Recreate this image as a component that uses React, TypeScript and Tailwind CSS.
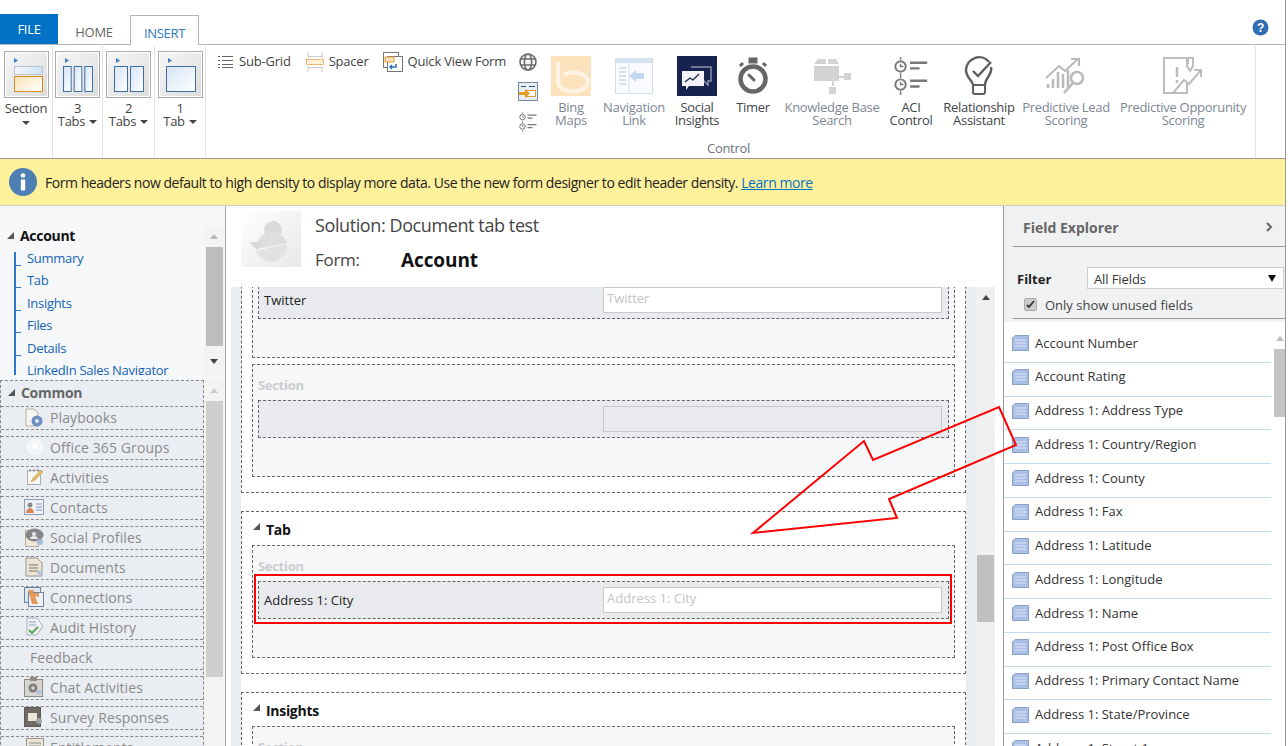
import type { ReactNode } from 'react';

const fieldNames = [
  'Account Number',
  'Account Rating',
  'Address 1: Address Type',
  'Address 1: Country/Region',
  'Address 1: County',
  'Address 1: Fax',
  'Address 1: Latitude',
  'Address 1: Longitude',
  'Address 1: Name',
  'Address 1: Post Office Box',
  'Address 1: Primary Contact Name',
  'Address 1: State/Province',
  'Address 1: Street 1',
];

const accountLinks = ['Summary', 'Tab', 'Insights', 'Files', 'Details', 'LinkedIn Sales Navigator'];

function Caret() {
  return <span className="inline-block w-0 h-0 border-x-[4px] border-x-transparent border-t-[4px] border-t-[#444]" />;
}

function Corner() {
  return (
    <svg width="9" height="9" viewBox="0 0 9 9" className="shrink-0">
      <path d="M8 1v7H1z" fill="#555" />
    </svg>
  );
}

function TabIcon({ cols, id }: { cols: number; id: string }) {
  const gap = 3;
  const total = 29;
  const w = (total - gap * (cols - 1)) / cols;
  return (
    <div className="w-[45px] h-[47px] border border-[#ababab] p-[1px] bg-white">
      <svg width="41" height="43" viewBox="0 0 41 43">
        <defs>
          <linearGradient id={id + 'bg'} x1="0" y1="0" x2="1" y2="1">
            <stop offset="0" stopColor="#f6f6f6" />
            <stop offset="1" stopColor="#dcdcdc" />
          </linearGradient>
          <linearGradient id={id + 'c'} x1="0" y1="0" x2="1" y2="1">
            <stop offset="0" stopColor="#d5e4f6" />
            <stop offset="1" stopColor="#ffffff" />
          </linearGradient>
        </defs>
        <rect width="41" height="43" rx="2" fill={'url(#' + id + 'bg)'} />
        <path d="M8 5l4 2.5L8 10z" fill="#3f7fc4" />
        {Array.from({ length: cols }).map((_, i) => (
          <rect key={i} x={6.5 + i * (w + gap)} y="13.5" width={w} height="25" fill={'url(#' + id + 'c)'} stroke="#3f6ea5" />
        ))}
      </svg>
    </div>
  );
}

function SectionIcon() {
  return (
    <div className="w-[45px] h-[47px] border border-[#ababab] p-[1px] bg-white">
      <svg width="41" height="43" viewBox="0 0 41 43">
        <defs>
          <linearGradient id="secbg" x1="0" y1="0" x2="1" y2="1">
            <stop offset="0" stopColor="#f6f6f6" />
            <stop offset="1" stopColor="#dcdcdc" />
          </linearGradient>
          <linearGradient id="secb" x1="0" y1="0" x2="1" y2="0">
            <stop offset="0" stopColor="#f3f6fa" />
            <stop offset="1" stopColor="#cfe0f5" />
          </linearGradient>
          <linearGradient id="seco" x1="0" y1="0" x2="1" y2="1">
            <stop offset="0" stopColor="#fce3b8" />
            <stop offset="1" stopColor="#ffffff" />
          </linearGradient>
        </defs>
        <rect width="41" height="43" rx="2" fill="url(#secbg)" />
        <path d="M8 5l4 2.5L8 10z" fill="#3f7fc4" />
        <rect x="8.5" y="13.5" width="28" height="8" fill="url(#secb)" stroke="#b8c4d2" />
        <rect x="8.5" y="23.5" width="28" height="15" fill="url(#seco)" stroke="#d98a1f" />
      </svg>
    </div>
  );
}

function BigButton({ width, label, sub, caret }: { width: number; label: string; sub?: string; caret?: boolean }) {
  return (
    <div className="h-full border-r border-[#e3e3e3] flex flex-col items-center text-[13px] leading-[13px] text-[#444] pt-[5px]" style={{ width }}>
      {label === 'Section' ? <SectionIcon /> : <TabIcon cols={Number(label)} id={'t' + label} />}
      <span className="mt-[4px]">{label}</span>
      {sub && (
        <span className="flex items-center gap-[4px]">
          {sub}
          {caret && <Caret />}
        </span>
      )}
      {!sub && (
        <span className="mt-[6px] flex">
          <Caret />
        </span>
      )}
    </div>
  );
}

function SubGridIcon() {
  return (
    <svg width="15" height="14" viewBox="0 0 15 14" stroke="#666" fill="none">
      <path d="M0 1.5h2M4 1.5h11M0 5.5h2M4 5.5h11M0 9.5h2M4 9.5h11M0 12.5h2M4 12.5h11" />
    </svg>
  );
}

function SpacerIcon() {
  return (
    <svg width="18" height="20" viewBox="0 0 18 20" fill="none">
      <path d="M2 0v6M16 0v6M2 14v6M16 14v6" stroke="#ccc" />
      <path d="M2 4.5h14M2 15.5h14" stroke="#ccc" />
      <rect x="0.5" y="7.5" width="17" height="5" fill="#fdf0dc" stroke="#e39a3c" strokeDasharray="2 1" />
    </svg>
  );
}

function QuickViewIcon() {
  return (
    <svg width="20" height="20" viewBox="0 0 20 20" fill="none">
      <rect x="0.5" y="0.5" width="15" height="15" fill="#fff" stroke="#777" />
      <rect x="4.5" y="4.5" width="15" height="15" fill="#fff" stroke="#777" />
      <path d="M2 5h9v5H2z" fill="#fbe3c2" stroke="#e69a3a" />
      <path d="M13 12v3H7m2-2l-2 2 2 2" stroke="#2f6fb5" strokeWidth="1.5" />
    </svg>
  );
}

function GlobeIcon() {
  return (
    <svg width="18" height="18" viewBox="0 0 18 18" fill="none" stroke="#6d6d6d" strokeWidth="1.6">
      <circle cx="9" cy="9" r="8" />
      <ellipse cx="9" cy="9" rx="3.6" ry="8" />
      <path d="M1.5 6h15M1.5 12h15" />
    </svg>
  );
}

function WebResIcon() {
  return (
    <svg width="20" height="19" viewBox="0 0 20 19" fill="none">
      <rect x="0.5" y="0.5" width="19" height="18" fill="#e8eef5" stroke="#7288a3" />
      <path d="M3 4.5h5M11 4.5h6" stroke="#2f4f7a" />
      <rect x="8.5" y="8.5" width="9" height="6" fill="#fff" stroke="#e39a3c" />
      <path d="M1 10h6V7l5 4.5L7 16v-3H1z" fill="#e69a1e" />
    </svg>
  );
}

function AciIcon({ size, color }: { size: number; color: string }) {
  return (
    <svg width={size} height={size} viewBox="0 0 36 40" fill="none" stroke={color}>
      <circle cx="7" cy="10" r="5.5" strokeWidth="2" />
      <circle cx="7" cy="29" r="5.5" strokeWidth="2" />
      <path d="M7 0v3M7 17v5M7 36v4M7 7v3h3M7 26v3h3" strokeWidth="1.5" />
      <path d="M17 6h18M17 12h10M17 25h18M17 31h10" strokeWidth="2.5" />
    </svg>
  );
}

function BingIcon() {
  return (
    <svg width="40" height="40" viewBox="0 0 40 40">
      <rect width="40" height="40" fill="#fde3bd" />
      <path d="M7 6v20a15 9.5 0 1 0 15-9.5c-4 0-7 1-9 2" fill="none" stroke="#fff4e4" strokeWidth="4" />
    </svg>
  );
}

function NavLinkIcon() {
  return (
    <svg width="38" height="36" viewBox="0 0 38 36" fill="none">
      <rect x="0.5" y="0.5" width="37" height="35" fill="#f9fbfe" stroke="#d5deec" />
      <rect x="1" y="1" width="36" height="4" fill="#d6e3f5" />
      <path d="M14 5v30" stroke="#d5deec" />
      <path d="M4 10h7M4 14h7M4 18h7M4 22h7M4 26h7" stroke="#c6d3e6" strokeWidth="1.5" />
      <path d="M14 18l7-6v3h8v6h-8v3z" fill="#c4d7f2" />
    </svg>
  );
}

function SocialIcon() {
  return (
    <svg width="40" height="40" viewBox="0 0 40 40" fill="none">
      <rect width="40" height="40" fill="#17234f" />
      <path d="M14 11h20v14h-3v4l-4-4H22" stroke="#8a93ad" strokeWidth="1.5" />
      <path d="M5 15h22v15H12l-3 4v-4H5z" fill="#f2f3f7" />
      <path d="M8 26l5-4 3 2 6-6" stroke="#17234f" strokeWidth="1.2" />
    </svg>
  );
}

function TimerIcon() {
  return (
    <svg width="32" height="38" viewBox="0 0 32 38" fill="none" stroke="#666">
      <circle cx="16" cy="22" r="12.5" strokeWidth="4.5" />
      <rect x="12" y="1" width="8" height="5" fill="#666" />
      <path d="M3 9l3-3M29 9l-3-3" strokeWidth="3" />
      <path d="M12 18l5 5" strokeWidth="3" strokeLinecap="round" />
    </svg>
  );
}

function KbIcon() {
  return (
    <svg width="38" height="38" viewBox="0 0 38 38" fill="#d3d3d3">
      <path d="M1 7l4-5h8v5zM15 2h8l3 5H15zM1 9h25v15H1z" />
      <path d="M20 24v5" stroke="#d3d3d3" strokeWidth="2" />
      <path d="M20 20h12" stroke="#d3d3d3" strokeWidth="2" />
      <rect x="31" y="16" width="7" height="7" />
      <rect x="16" y="30" width="7" height="7" />
    </svg>
  );
}

function BulbIcon() {
  return (
    <svg width="30" height="40" viewBox="0 0 30 40" fill="none" stroke="#5f5f5f" strokeWidth="2.4">
      <path d="M9 29c0-4-7-7-7-15a13 13 0 0 1 23-8" />
      <path d="M27 11c2 7-6 11-6 18" />
      <path d="M9 29h12v7a2 2 0 0 1-2 2h-8a2 2 0 0 1-2-2z" strokeWidth="2" />
      <path d="M9 15l5 5 13-14" />
    </svg>
  );
}

function LeadIcon() {
  return (
    <svg width="40" height="36" viewBox="0 0 40 36" fill="none" stroke="#b9b9b9">
      <path d="M0 20L13 8l6 5L32 1m-7 0h8v7" strokeWidth="2" />
      <path d="M2 30v-4M7 30v-9M12 30V14M17 30V16M22 30V12" strokeWidth="2.5" />
      <circle cx="31" cy="20" r="6" strokeWidth="2.5" />
      <path d="M27 25l-9 10" strokeWidth="2.5" />
    </svg>
  );
}

function OppIcon() {
  return (
    <svg width="40" height="38" viewBox="0 0 40 38" fill="none" stroke="#bdbdbd" strokeWidth="2">
      <path d="M24 26v10H1V1h24v6" />
      <path d="M24 1v8l3 5 3-5V1z" />
      <path d="M14 10v10M14 23v3" strokeWidth="2.5" />
      <path d="M10 36l11-13 5 4 12-14m-7 0h7v7" />
    </svg>
  );
}

function ControlButton({ width, label, sub, icon, off }: { width: number; label: string; sub?: string; icon: ReactNode; off?: boolean }) {
  return (
    <div className="flex flex-col items-center shrink-0" style={{ width }}>
      <div className="h-[41px] flex items-center justify-center">{icon}</div>
      <span className={'mt-[5px] text-center text-[13px] leading-[13px] whitespace-nowrap ' + (off ? 'text-[#7e8794]' : 'text-[#3f4348]')}>
        {label}
        {sub && <br />}
        {sub}
      </span>
    </div>
  );
}

function NavIcon({ kind }: { kind: string }) {
  if (kind === 'groups') {
    return (
      <svg width="18" height="18" viewBox="0 0 18 18">
        <circle cx="9" cy="9" r="8" fill="#f4f6f9" stroke="#f8f9fb" />
        <circle cx="9" cy="8" r="2.5" fill="#fff" />
      </svg>
    );
  }
  if (kind === 'playbooks') {
    return (
      <svg width="19" height="19" viewBox="0 0 19 19">
        <path d="M1 1h8l4 4v13H1z" fill="#f7f5f1" stroke="#b9b1a5" />
        <circle cx="12" cy="13" r="5.5" fill="#6e8cc0" />
        <circle cx="12" cy="13" r="2" fill="#dfe7f4" />
      </svg>
    );
  }
  if (kind === 'activities') {
    return (
      <svg width="18" height="18" viewBox="0 0 18 18">
        <rect x="1.5" y="2.5" width="13" height="14" fill="#f7f7f5" stroke="#a9adb3" />
        <path d="M4 1v3M8 1v3M12 1v3" stroke="#8a8f96" />
        <path d="M5 14l2-4 8-8 2 2-8 8z" fill="#e6bd6a" stroke="#b78e44" strokeWidth="0.5" />
      </svg>
    );
  }
  if (kind === 'contacts') {
    return (
      <svg width="20" height="20" viewBox="0 0 20 20">
        <rect x="0.5" y="2.5" width="19" height="15" fill="#eef2f8" stroke="#8b9db8" />
        <circle cx="6" cy="8" r="2.5" fill="#8a8a8a" />
        <path d="M2 16c0-3 2-5 4-5s4 2 4 5z" fill="#d98555" />
        <path d="M12 7h6M12 10h6M12 13h6" stroke="#7d98bd" />
      </svg>
    );
  }
  if (kind === 'social') {
    return (
      <svg width="19" height="20" viewBox="0 0 19 20">
        <rect x="0.5" y="3.5" width="13" height="16" fill="#efe6d6" stroke="#b5ad9f" />
        <ellipse cx="9.5" cy="8" rx="9" ry="6.5" fill="#85868a" />
        <circle cx="9" cy="7" r="2" fill="#e9e9e9" />
        <path d="M5 12c0-2 2-3 4-3s4 1 4 3z" fill="#e9e9e9" />
        <circle cx="15" cy="15" r="3" fill="#a7bad6" />
      </svg>
    );
  }
  if (kind === 'documents') {
    return (
      <svg width="19" height="20" viewBox="0 0 19 20">
        <path d="M1 1h11l5 5v13H1z" fill="#ece4d4" stroke="#9c9488" />
        <path d="M4 8h9M4 11h9M4 14h9" stroke="#77736c" />
        <circle cx="15" cy="16" r="2.5" fill="#b5c4da" />
      </svg>
    );
  }
  if (kind === 'connections') {
    return (
      <svg width="20" height="20" viewBox="0 0 20 20">
        <rect x="0.5" y="0.5" width="16" height="15" fill="#dee6f0" stroke="#6c83a6" />
        <rect x="4.5" y="5.5" width="15" height="14" fill="#eef2f7" stroke="#6c83a6" />
        <path d="M4 3h6l-1 3h6v4l-4-1 3 8H8z" fill="#e29a58" />
      </svg>
    );
  }
  if (kind === 'audit') {
    return (
      <svg width="18" height="20" viewBox="0 0 18 20">
        <path d="M1 1h10l6 8-6 9H1z" fill="#eef0f4" stroke="#a8b0bd" />
        <path d="M3 5h7M3 8h7" stroke="#8aa3c6" />
        <path d="M3 13l3 3 6-6" fill="none" stroke="#55a54a" strokeWidth="1.8" />
      </svg>
    );
  }
  if (kind === 'chat') {
    return (
      <svg width="20" height="20" viewBox="0 0 20 20">
        <rect x="0.5" y="2.5" width="18" height="17" fill="#d9d6cf" stroke="#8f8b84" />
        <rect x="6" y="0" width="7" height="4" fill="#8f8b84" />
        <circle cx="9" cy="11" r="4.5" fill="#7f7f7f" />
        <circle cx="9" cy="11" r="1.8" fill="#dad8d2" />
        <circle cx="15" cy="15" r="2.5" fill="#b5c4da" />
      </svg>
    );
  }
  if (kind === 'survey') {
    return (
      <svg width="20" height="20" viewBox="0 0 20 20">
        <rect x="0.5" y="0.5" width="16" height="19" fill="#6e6a63" stroke="#5e5a54" />
        <rect x="4" y="6" width="9" height="8" fill="#ece7dc" />
        <circle cx="15" cy="14" r="3" fill="#9aa3b0" />
      </svg>
    );
  }
  return (
    <svg width="18" height="18" viewBox="0 0 18 18">
      <rect x="0.5" y="0.5" width="17" height="17" fill="#ece4d4" stroke="#9c9488" />
      <path d="M3 5h12M3 8h12" stroke="#8a8f96" />
    </svg>
  );
}

const commonItems = [
  { name: 'Playbooks', kind: 'playbooks' },
  { name: 'Office 365 Groups', kind: 'groups' },
  { name: 'Activities', kind: 'activities' },
  { name: 'Contacts', kind: 'contacts' },
  { name: 'Social Profiles', kind: 'social' },
  { name: 'Documents', kind: 'documents' },
  { name: 'Connections', kind: 'connections' },
  { name: 'Audit History', kind: 'audit' },
  { name: 'Feedback', kind: '' },
  { name: 'Chat Activities', kind: 'chat' },
  { name: 'Survey Responses', kind: 'survey' },
  { name: 'Entitlements', kind: 'entitlements' },
];

function FieldRow({ label, placeholder, highlight }: { label?: string; placeholder?: string; highlight?: boolean }) {
  return (
    <div className="relative h-[38px] ml-[5px] mr-[5px] border border-dashed border-[#666] bg-[#e8eaee] flex justify-between pr-[6px] tracking-normal">
      <span className="pl-[5px] pt-[9px] text-[13px] leading-[18px] text-[#222]">{label}</span>
      <div
        className={
          'mt-[5px] w-[339px] h-[26px] border border-[#c8c8c8] px-[3px] text-[13px] leading-[21px] text-[#c4c4c4] ' +
          (placeholder ? 'bg-white' : 'bg-[#e8eaee]')
        }
      >
        {placeholder}
      </div>
      {highlight && <div className="absolute -left-[5px] -right-[4px] -top-[8px] -bottom-[6px] border-2 border-[#f00]" />}
    </div>
  );
}

function FormSection({ children }: { children: ReactNode }) {
  return (
    <div className="mx-[10px] h-[113px] border border-dashed border-[#666] bg-[#f6f7f9]">
      <div className="h-[35px] pl-[5px] pt-[11px] text-[13px] leading-[18px] font-bold text-[#ccc]">Section</div>
      {children}
    </div>
  );
}

function TabHeading({ title }: { title: string }) {
  return (
    <div className="h-[33px] flex items-center gap-[5px] pl-[10px] pt-[2px] text-[14px] font-bold text-[#111]">
      <span className="-mt-[6px] flex">
        <Corner />
      </span>
      {title}
    </div>
  );
}

function FieldIcon() {
  return (
    <svg width="17" height="16" viewBox="0 0 17 16" className="shrink-0">
      <path d="M3 0.5h13.5v15H0.5V3z" fill="#a9bfe6" stroke="#8a9fc8" />
      <path d="M3 5h11M3 8h11M3 11h11" stroke="#dfe8f7" />
    </svg>
  );
}

export default function App() {
  return (
    <div className="relative w-[1288px] h-[746px] overflow-hidden bg-white flex font-['Open_Sans','Noto_Sans',sans-serif] text-[13px] tracking-[-0.3px]">
      <div className="w-[1286px] border-r border-[#999] flex flex-col shrink-0">
        {/* tab strip */}
        <div className="h-[45px] border-b border-[#b5b5b5] flex items-end shrink-0 relative pr-[16px]">
          <div className="w-[58px] h-[30px] bg-[#0072c6] text-white text-center leading-[30px] text-[13px]">FILE</div>
          <div className="w-[72px] h-[29px] text-center leading-[34px] text-[#666]">HOME</div>
          <div className="w-[69px] h-[30px] -mb-px border border-b-0 border-[#b5b5b5] bg-white text-center leading-[34px] text-[#2a78b8]">INSERT</div>
          <svg width="17" height="17" viewBox="0 0 17 17" className="ml-auto mb-[8px]">
            <circle cx="8.5" cy="8.5" r="8" fill="#2f6db0" />
            <text x="8.5" y="13" textAnchor="middle" fontSize="12" fontWeight="700" fill="#fff" fontFamily="Liberation Sans, sans-serif">?</text>
          </svg>
        </div>

        {/* ribbon */}
        <div className="h-[114px] border-b border-[#999] flex shrink-0 pt-[1px]">
          <BigButton width={53} label="Section" />
          <BigButton width={50} label="3" sub="Tabs" caret />
          <BigButton width={52} label="2" sub="Tabs" caret />
          <BigButton width={51} label="1" sub="Tab" caret />
          <div className="w-[1050px] h-full border-r border-[#e3e3e3] flex flex-col">
            <div className="flex-1 flex">
              <div className="w-[309px] flex items-start pl-[12px] pt-[6px] text-[#444] tracking-[-0.2px] shrink-0">
                <span className="flex items-center gap-[6px] h-[20px]"><SubGridIcon />Sub-Grid</span>
                <span className="flex items-center gap-[5px] h-[20px] ml-[15px]"><SpacerIcon />Spacer</span>
                <span className="flex items-center gap-[5px] h-[20px] ml-[14px]"><QuickViewIcon />Quick View Form</span>
              </div>
              <div className="w-[26px] flex flex-col items-center pt-[7px] gap-[11px] shrink-0">
                <GlobeIcon />
                <WebResIcon />
                <AciIcon size={20} color="#777" />
              </div>
              <div className="flex pt-[9px]">
                <ControlButton width={60} label="Bing" sub="Maps" icon={<BingIcon />} off />
                <ControlButton width={66} label="Navigation" sub="Link" icon={<NavLinkIcon />} off />
                <ControlButton width={60} label="Social" sub="Insights" icon={<SocialIcon />} />
                <ControlButton width={52} label="Timer" icon={<TimerIcon />} />
                <ControlButton width={106} label="Knowledge Base" sub="Search" icon={<KbIcon />} off />
                <ControlButton width={52} label="ACI" sub="Control" icon={<AciIcon size={38} color="#777" />} />
                <ControlButton width={84} label="Relationship" sub="Assistant" icon={<BulbIcon />} />
                <ControlButton width={90} label="Predictive Lead" sub="Scoring" icon={<LeadIcon />} off />
                <ControlButton width={144} label="Predictive Opporunity" sub="Scoring" icon={<OppIcon />} off />
              </div>
            </div>
            <div className="text-center pr-[4px] pb-[2px] text-[13px] leading-[16px] text-[#6d7480]">Control</div>
          </div>
        </div>

        {/* notification */}
        <div className="h-[47px] bg-[#fff09c] border-b border-[#ccc] flex items-center gap-[8px] pl-[9px] shrink-0">
          <svg width="28" height="28" viewBox="0 0 28 28">
            <circle cx="14" cy="14" r="14" fill="#4d7fb5" />
            <circle cx="14" cy="7.5" r="2.3" fill="#fff" />
            <rect x="11.8" y="11.5" width="4.4" height="11" fill="#fff" />
          </svg>
          <span className="text-[14px] text-[#222] tracking-[-0.45px]">
            Form headers now default to high density to display more data. Use the new form designer to edit header density.{' '}
            <span className="text-[#0072c6] underline">Learn more</span>
          </span>
        </div>

        <div className="flex-1 flex min-h-0">
          {/* left nav */}
          <div className="w-[226px] border-r border-[#a6a6a6] bg-[#f6f7f9] flex flex-col shrink-0 overflow-hidden">
            <div className="h-[174px] flex shrink-0">
              <div className="w-[204px] pt-[20px] overflow-hidden">
                <div className="flex items-center gap-[5px] pl-[6px] h-[18px] text-[14px] font-bold text-[#111]">
                  <Corner />
                  Account
                </div>
                <div className="ml-[14px] mt-[8px] h-[123px] overflow-hidden border-l-2 border-[#2a7ccb]">
                  <div className="-mt-[5px]">
                    {accountLinks.map((n) => (
                      <div key={n} className="h-[22.5px] flex items-center">
                        <span className="w-[5px] h-[1px] self-end mb-[4px] bg-[#2a7ccb] mr-[6px] shrink-0" />
                        <span className="text-[13px] text-[#1464b4] whitespace-nowrap">{n}</span>
                      </div>
                    ))}
                  </div>
                </div>
              </div>
              <div className="w-[20px] mt-[20px] h-[150px] bg-[#f3f3f3] flex flex-col items-center">
                <span className="mt-[8px] w-0 h-0 border-x-[4px] border-x-transparent border-b-[5px] border-b-[#bbb]" />
                <div className="mt-[8px] ml-[1px] w-[17px] h-[99px] bg-[#bdbdbd]" />
                <span className="mt-[13px] w-0 h-0 border-x-[4px] border-x-transparent border-t-[5px] border-t-[#444]" />
              </div>
            </div>
            <div className="flex flex-1 min-h-0">
              <div className="w-[204px] h-[400px] border border-dashed border-[#888] border-b-0 bg-[#eaeef3] shrink-0">
                <div className="h-[25px] flex items-center gap-[5px] pl-[6px] pb-[2px] text-[14px] font-bold text-[#666]">
                  <Corner />
                  Common
                </div>
                {commonItems.map((item) => (
                  <div key={item.name} className="h-[24px] mb-[6px] border-y border-dashed border-[#888] flex items-center pb-[2px] text-[14px] tracking-[0.1px] text-[#8a8a8a]">
                    {item.kind ? (
                      <span className="w-[49px] flex justify-end pr-[6px] shrink-0">
                        <NavIcon kind={item.kind} />
                      </span>
                    ) : (
                      <span className="w-[29px] shrink-0" />
                    )}
                    {item.name}
                  </div>
                ))}
              </div>
              <div className="w-[20px] bg-[#f3f3f3] flex flex-col items-center">
                <span className="mt-[8px] w-0 h-0 border-x-[4px] border-x-transparent border-b-[5px] border-b-[#ccc]" />
                <div className="mt-[8px] ml-[1px] w-[17px] h-[276px] bg-[#cdcfcd]" />
              </div>
            </div>
          </div>

          {/* form canvas */}
          <div className="w-[777px] flex flex-col shrink-0">
            <div className="h-[81px] flex shrink-0 pl-[15px] pt-[5px]">
              <svg width="60" height="56" viewBox="0 0 60 56">
                <defs>
                  <linearGradient id="av" x1="0" y1="0" x2="1" y2="1">
                    <stop offset="0" stopColor="#ffffff" />
                    <stop offset="1" stopColor="#e8e8e8" />
                  </linearGradient>
                </defs>
                <rect width="60" height="56" fill="url(#av)" />
                <circle cx="32" cy="19" r="9" fill="#dadada" />
                <path d="M15 38a16 16 0 0 1 31-6z" fill="#dedede" />
                <path d="M15 40l31-7a16 16 0 0 1-31 7z" fill="#e2e2e2" />
                <path d="M8 31h14l-6 8z" fill="#d8d8d8" />
              </svg>
              <div className="ml-[14px] text-[#444]">
                <div className="text-[18px] leading-[28px] tracking-[-0.4px]">Solution: Document tab test</div>
                <div className="flex items-center mt-[8px]">
                  <span className="w-[86px] text-[17px] leading-[26px]">Form:</span>
                  <span className="text-[19px] leading-[26px] font-bold tracking-[-0.1px] text-[#111]">Account</span>
                </div>
              </div>
            </div>
            <div className="flex-1 min-h-0 flex pl-[5px]">
              <div className="w-[10px] bg-[#e9ecf0] shrink-0" />
              <div className="w-[725px] shrink-0 overflow-hidden">
                <div className="-mt-[76px]">
                  <div className="h-[282px] border border-dashed border-[#666] pt-[33px]">
                    <FormSection>
                      <FieldRow label="Twitter" placeholder="Twitter" />
                    </FormSection>
                    <div className="h-[6px]" />
                    <FormSection>
                      <FieldRow />
                    </FormSection>
                  </div>
                  <div className="mt-[18px] h-[163px] border border-dashed border-[#666]">
                    <TabHeading title="Tab" />
                    <FormSection>
                      <FieldRow label="Address 1: City" placeholder="Address 1: City" highlight />
                    </FormSection>
                  </div>
                  <div className="mt-[18px] h-[163px] border border-dashed border-[#666]">
                    <TabHeading title="Insights" />
                    <FormSection>
                      <FieldRow />
                    </FormSection>
                  </div>
                </div>
              </div>
              <div className="w-[10px] bg-[#e9ecf0] shrink-0" />
              <div className="w-[19px] bg-[#f0f0f0] shrink-0 flex flex-col items-center">
                <span className="mt-[8px] w-0 h-0 border-x-[4px] border-x-transparent border-b-[5px] border-b-[#444]" />
                <div className="mt-[255px] w-[17px] h-[67px] bg-[#bfbfbf]" />
              </div>
            </div>
          </div>

          {/* field explorer */}
          <div className="flex-1 min-w-0 border-l border-[#999] flex flex-col tracking-normal">
            <div className="h-[116px] bg-[#f0f1f3] shrink-0 pl-[9px]">
              <div className="h-[41px] border-b border-[#999] flex items-center justify-between pl-[10px] pr-[12px] pt-[2px]">
                <span className="text-[14px] font-bold text-[#666]">Field Explorer</span>
                <svg width="7" height="10" viewBox="0 0 7 10" fill="none" stroke="#666" strokeWidth="2">
                  <path d="M1 1l4 4-4 4" />
                </svg>
              </div>
              <div className="flex items-center mt-[20px] pl-[4px]">
                <span className="w-[70px] pt-[3px] text-[13px] font-bold text-[#222]">Filter</span>
                <div className="w-[197px] h-[22px] bg-white border border-[#ccc] flex items-center justify-between pl-[6px] pr-[7px] text-[#333]">
                  <span className="pt-[3px] tracking-[-0.1px]">All Fields</span>
                  <span className="w-0 h-0 border-x-[4px] border-x-transparent border-t-[7px] border-t-[#111]" />
                </div>
              </div>
              <div className="flex items-center gap-[8px] pl-[11px] mt-[7px] h-[15px] text-[#444]">
                <span className="w-[13px] h-[13px] rounded-[2px] bg-[#ccc] border border-[#aaa] flex items-center justify-center">
                  <svg width="9" height="9" viewBox="0 0 9 9" fill="none" stroke="#333" strokeWidth="1.8">
                    <path d="M1 5l2 2 5-6" />
                  </svg>
                </span>
                <span className="pt-[3px]">Only show unused fields</span>
              </div>
              <div className="border-b border-[#999] mt-[6px]" />
            </div>
            <div className="flex-1 min-h-0 flex overflow-hidden">
              <div className="w-[267px] shrink-0 pt-[7px]">
                {fieldNames.map((n) => (
                  <div key={n} className="h-[33.75px] border-b border-[#c5d9f1] flex items-center gap-[6px] pl-[8px] pb-[4px] text-[#333]">
                    <FieldIcon />
                    {n}
                  </div>
                ))}
              </div>
              <div className="w-[14px] ml-[2px] shrink-0 flex flex-col items-center">
                <span className="mt-[14px] w-0 h-0 border-x-[4px] border-x-transparent border-b-[5px] border-b-[#bbb]" />
                <div className="mt-[8px] w-[12px] h-[68px] bg-[#c4c4c4]" />
              </div>
            </div>
          </div>
        </div>
      </div>

      {/* annotation arrow drawn over the screenshot */}
      <svg width="1288" height="746" viewBox="0 0 1288 746" className="absolute left-0 top-0 pointer-events-none">
        <polygon points="999,407 1016,445 889,499 897,518 753,533 864,441 873,460" fill="none" stroke="#f00" strokeWidth="2" />
      </svg>
    </div>
  );
}
